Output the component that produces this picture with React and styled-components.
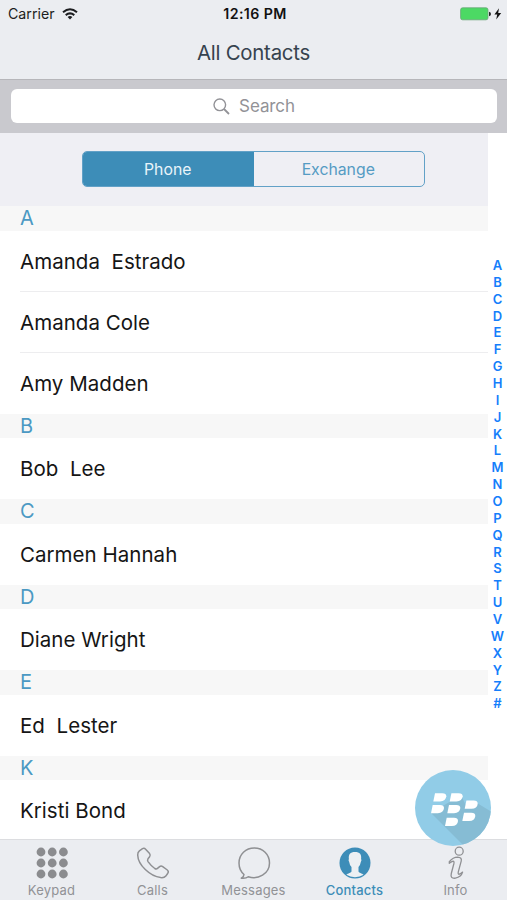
import React from 'react';
import styled, { createGlobalStyle } from 'styled-components';

const GlobalStyle = createGlobalStyle`
  * { box-sizing: border-box; }
  body { margin: 0; background: #fff; font-family: Inter, 'Liberation Sans', sans-serif; }
`;

const Screen = styled.div`
  position: relative;
  display: flex;
  flex-direction: column;
  width: 507px;
  height: 900px;
  overflow: hidden;
  background: #fff;
`;

const StatusBar = styled.div`
  display: grid;
  grid-template-columns: 1fr auto 1fr;
  align-items: center;
  height: 27px;
  padding: 0 5px 0 8px;
  flex: none;
  background: #ebedf1;
  color: #1c1d20;
`;

const Carrier = styled.div`
  display: flex;
  align-items: center;
  gap: 7px;
  font-size: 14.2px;
`;

const Clock = styled.div`
  font-size: 14.2px;
  font-weight: 600;
  letter-spacing: 0.4px;
  color: #111;
`;

const Power = styled.div`
  display: flex;
  justify-content: flex-end;
`;

const TitleBar = styled.header`
  display: flex;
  align-items: center;
  justify-content: center;
  height: 52px;
  flex: none;
  background: #ebedf1;
  color: #36424e;
  font-size: 20.4px;
  letter-spacing: -0.25px;
  padding-bottom: 2px;
`;

const SearchBar = styled.div`
  height: 54px;
  flex: none;
  padding: 9px 10px 9px 11px;
  background: #c9c9ce;
  border-top: 1px solid #b6b6ba;
`;

const SearchField = styled.div`
  display: flex;
  align-items: center;
  justify-content: center;
  gap: 9px;
  height: 34px;
  border-radius: 6px;
  background: #fff;
  color: #929297;
  font-size: 17px;
  letter-spacing: -0.1px;
`;

const Body = styled.main`
  display: flex;
  height: 706px;
  flex: none;
`;

const List = styled.div`
  width: 488px;
`;

const SegmentArea = styled.div`
  display: flex;
  justify-content: center;
  height: 73.2px;
  padding: 18px 0 0 19px;
  background: #efeff4;
`;

const Segments = styled.div`
  display: grid;
  grid-template-columns: 1fr 1fr;
  width: 343px;
  height: 36px;
  border: 1.5px solid #62a1c7;
  border-radius: 5px;
  overflow: hidden;
`;

const Segment = styled.div`
  display: flex;
  align-items: center;
  justify-content: center;
  background: ${(p) => (p.$active ? '#3d8db8' : 'transparent')};
  color: ${(p) => (p.$active ? '#e9f4fa' : '#559bc3')};
  font-size: 15.8px;
  padding-right: 1px;
`;

const SectionHeader = styled.div`
  height: 24.4px;
  padding-left: 20px;
  background: #f7f7f7;
  color: #4b99c3;
  font-size: 20px;
  line-height: 24.4px;
`;

const Contact = styled.div`
  height: 61.1px;
  margin-left: 20px;
  border-bottom: 1px solid ${(p) => (p.$divided ? '#ededef' : 'transparent')};
  color: #151515;
  font-size: 20.5px;
  line-height: 62.4px;
  white-space: pre;
  letter-spacing: 0.03px;
`;

const IndexRail = styled.nav`
  display: flex;
  flex-direction: column;
  align-items: center;
  width: 19px;
  padding-top: 124px;
`;

const IndexLetter = styled.span`
  height: 16.87px;
  color: #147efb;
  font-size: 13px;
  font-weight: 600;
  line-height: 16.87px;
`;

const TabBar = styled.footer`
  position: absolute;
  left: 0;
  bottom: 0;
  display: grid;
  grid-template-columns: repeat(5, 101px);
  padding: 0 1px;
  width: 507px;
  height: 61px;
  background: #ebedf1;
  border-top: 1px solid #dcdde0;
`;

const Tab = styled.div`
  display: flex;
  flex-direction: column;
  align-items: center;
  padding-top: 6px;
  color: ${(p) => (p.$active ? '#3d8db8' : '#919296')};
  font-size: 13px;
  font-weight: ${(p) => (p.$active ? 500 : 400)};
  line-height: 16px;
  letter-spacing: 0.2px;
`;

const TabIcon = styled.svg`
  display: block;
  width: 34px;
  height: 34px;
  margin-bottom: 2px;
  overflow: visible;
`;

const FloatingBadge = styled.div`
  position: absolute;
  left: 415px;
  top: 770px;
  width: 76px;
  height: 76px;
`;

const SECTIONS = [
  ['A', ['Amanda  Estrado', 'Amanda Cole', 'Amy Madden']],
  ['B', ['Bob  Lee']],
  ['C', ['Carmen Hannah']],
  ['D', ['Diane Wright']],
  ['E', ['Ed  Lester']],
  ['K', ['Kristi Bond']],
];

const KeypadIcon = () => (
  <TabIcon viewBox="0 0 34 34">
    {[6, 17, 28].map((y) =>
      [6, 17.2, 28.4].map((x) => <circle key={`${x}-${y}`} cx={x} cy={y} r="4.4" fill="#8b8c8f" />)
    )}
  </TabIcon>
);

const CallsIcon = () => (
  <TabIcon viewBox="0 0 34 34" fill="none" stroke="#8f9093" strokeWidth="1.5" strokeLinejoin="round">
    <path d="M3.4 4.8 L6.5 2.7 Q8.2 1.7 9.6 3.2 L13.6 7.6 Q14.9 9.2 13.6 10.8 L12 12.8 Q11.1 14.2 12 15.6 Q15 19.8 18.8 22.5 Q20.3 23.4 21.5 22.4 L23.6 20.6 Q25 19.5 26.7 20.6 L31.3 24 Q33 25.3 31.8 27.2 L29.8 30.1 Q28.2 32 24.7 31.6 C14 30.1 2 19 1.7 8.9 Q1.6 6.2 3.4 4.8Z" />
  </TabIcon>
);

const MessagesIcon = () => (
  <TabIcon viewBox="0 0 34 34" fill="none" stroke="#8f9093" strokeWidth="1.5" strokeLinejoin="round">
    <path d="M7 28.5 Q6.8 31 4.3 32.2 Q8.8 32.8 11.3 30.7 C21 34 32.5 27.8 32.5 17 C32.5 8.4 25.8 2 17.3 2 S2 8.4 2 17 C2 21.7 3.8 25.7 7 28.5Z" />
  </TabIcon>
);

const ContactsIcon = () => (
  <TabIcon viewBox="0 0 34 34">
    <circle cx="17" cy="17" r="15.5" fill="#3d8db8" />
    <path
      d="M17 6 C12.2 6 10.3 8.6 10.9 13 Q10 14.1 11.2 15.9 Q11.7 19.4 13.5 21.1 V25.2 C13.2 27.1 10 27 8.4 28.8 Q12.3 31.2 17 31.2 T25.6 28.8 C24 27 20.7 27.1 20.5 25.2 V21.1 Q22.3 19.2 22.8 15.9 Q24 14.1 23.1 13 C23.7 8.6 21.8 6 17 6Z"
      fill="#edf0f3"
    />
  </TabIcon>
);

const InfoIcon = () => (
  <TabIcon viewBox="0 0 34 34" fill="none" stroke="#8f9093" strokeWidth="1.3" strokeLinejoin="round">
    <circle cx="20.2" cy="5.2" r="4" />
    <path d="M10.3 15.6 Q14 11.3 18.7 11.2 Q23.2 11.4 22.2 15.2 L19.3 25.8 Q18.7 28.5 20.4 28.2 Q22 27.4 23.6 26.1 Q22.3 30.8 16.4 32.2 Q11 32.8 12.3 27.5 L14.9 17.5 Q15.5 14.7 13.5 15.4 Q12 16 10.3 17.3Z" />
  </TabIcon>
);

const Wifi = () => (
  <svg width="16" height="12" viewBox="0 0 16 12" fill="none" stroke="#1c1d20" strokeWidth="2">
    <path d="M1 4.2 Q8 -1.7 15 4.2" />
    <path d="M3.7 7.1 Q8 3.6 12.3 7.1" />
    <path d="M5.6 9 Q8 7.1 10.4 9 L8 11.6Z" fill="#1c1d20" stroke="none" />
  </svg>
);

const Battery = () => (
  <svg width="42" height="14" viewBox="0 0 42 14">
    <rect x=".6" y=".8" width="27.4" height="12" rx="2" fill="#4cd964" stroke="#68a676" strokeWidth=".8" />
    <path d="M29 4.7 Q31 5 31 7 T29 9.3Z" fill="#27292a" />
    <path d="M39 1.3 L34.4 7.5 H37.2 L36.2 12.4 L41.2 5.9 H38.2Z" fill="#151515" />
  </svg>
);

const SearchIcon = () => (
  <svg width="17" height="17" viewBox="0 0 17 17" fill="none" stroke="#929297" strokeWidth="1.4">
    <circle cx="6.8" cy="6.8" r="5.8" />
    <path d="M11 11 L16 16" strokeWidth="1.8" />
  </svg>
);

const MARKS = [[18.3, 23.2], [34.7, 23.2], [16, 35], [32.3, 35], [49.7, 30.6], [47.3, 42.8], [30, 47.8]];

const BadgeArt = () => (
  <svg width="76" height="76" viewBox="0 0 76 76">
    <defs>
      <clipPath id="disc"><circle cx="38" cy="38" r="38" /></clipPath>
    </defs>
    <circle cx="38" cy="38" r="38" fill="#91cce7" />
    <path clipPath="url(#disc)" d="M16 43 L52 79 L90 50 L62 33 L52 38 L46 25Z" fill="#86bcd4" />
    {MARKS.map(([x, y]) => (
      <path
        key={`${x}-${y}`}
        transform={`translate(${x} ${y})`}
        d="M1.7 0 H9 Q13 0 13 3.1 Q12.5 8.2 6.8 8.2 H0Z"
        fill="#fff"
      />
    ))}
  </svg>
);

const TABS = [
  ['Keypad', KeypadIcon],
  ['Calls', CallsIcon],
  ['Messages', MessagesIcon],
  ['Contacts', ContactsIcon],
  ['Info', InfoIcon],
];

export default function App() {
  return (
    <Screen>
      <GlobalStyle />
      <StatusBar>
        <Carrier>Carrier <Wifi /></Carrier>
        <Clock>12:16 PM</Clock>
        <Power><Battery /></Power>
      </StatusBar>
      <TitleBar>All Contacts</TitleBar>
      <SearchBar>
        <SearchField><SearchIcon />Search</SearchField>
      </SearchBar>
      <Body>
        <List>
          <SegmentArea>
            <Segments>
              <Segment $active>Phone</Segment>
              <Segment>Exchange</Segment>
            </Segments>
          </SegmentArea>
          {SECTIONS.map(([letter, names]) => (
            <section key={letter}>
              <SectionHeader>{letter}</SectionHeader>
              {names.map((name, i) => (
                <Contact key={name} $divided={i < names.length - 1}>{name}</Contact>
              ))}
            </section>
          ))}
        </List>
        <IndexRail>
          {[...'ABCDEFGHIJKLMNOPQRSTUVWXYZ#'].map((c) => <IndexLetter key={c}>{c}</IndexLetter>)}
        </IndexRail>
      </Body>
      <TabBar>
        {TABS.map(([label, Icon]) => (
          <Tab key={label} $active={label === 'Contacts'}>
            <Icon />
            {label}
          </Tab>
        ))}
      </TabBar>
      <FloatingBadge><BadgeArt /></FloatingBadge>
    </Screen>
  );
}
